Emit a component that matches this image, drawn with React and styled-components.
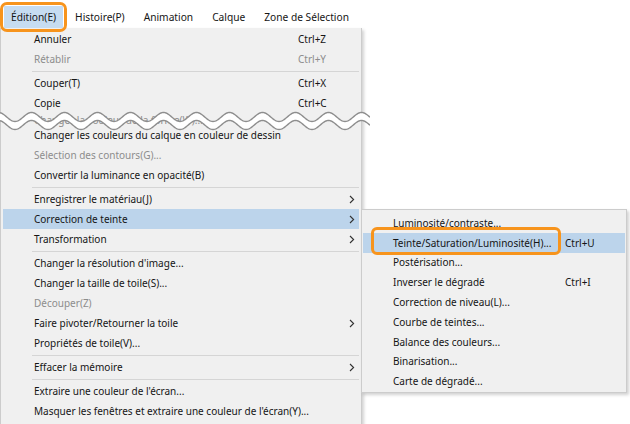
import React from "react";
import styled, { createGlobalStyle } from "styled-components";

const GlobalStyle = createGlobalStyle`
  html, body {
    margin: 0;
    padding: 0;
    background: #fff;
  }
`;

const ORANGE = "#f7941d";
const HILITE = "#bcd4eb";

const mainItems = [
  { label: "Annuler", shortcut: "Ctrl+Z" },
  { label: "Rétablir", shortcut: "Ctrl+Y", disabled: true },
  { sep: true },
  { label: "Couper(T)", shortcut: "Ctrl+X" },
  { label: "Copie", shortcut: "Ctrl+C" },
  { label: "Changer la couleur de la forme(W)...", disabled: true, cut: true },
  { label: "Changer les couleurs du calque en couleur de dessin" },
  { label: "Sélection des contours(G)...", disabled: true },
  { label: "Convertir la luminance en opacité(B)" },
  { sep: true },
  { label: "Enregistrer le matériau(J)", sub: true },
  { label: "Correction de teinte", sub: true, active: true, open: true },
  { label: "Transformation", sub: true },
  { sep: true },
  { label: "Changer la résolution d'image..." },
  { label: "Changer la taille de toile(S)..." },
  { label: "Découper(Z)", disabled: true },
  { label: "Faire pivoter/Retourner la toile", sub: true },
  { label: "Propriétés de toile(V)..." },
  { sep: true },
  { label: "Effacer la mémoire", sub: true },
  { sep: true },
  { label: "Extraire une couleur de l'écran..." },
  { label: "Masquer les fenêtres et extraire une couleur de l'écran(Y)..." },
];

const subItems = [
  { label: "Luminosité/contraste..." },
  { label: "Teinte/Saturation/Luminosité(H)...", shortcut: "Ctrl+U", active: true, ring: true },
  { label: "Postérisation..." },
  { label: "Inverser le dégradé", shortcut: "Ctrl+I" },
  { label: "Correction de niveau(L)..." },
  { label: "Courbe de teintes..." },
  { label: "Balance des couleurs..." },
  { label: "Binarisation..." },
  { label: "Carte de dégradé..." },
];

const Chevron = () => (
  <svg width="6" height="9" viewBox="0 0 6 9">
    <polyline points="1,1 4.6,4.5 1,8" fill="none" stroke="#333" strokeWidth="1.1" />
  </svg>
);

// wavy "cut" mark drawn across the menu
const waveY = (x, offset) => offset + 4.5 * Math.cos((2 * Math.PI * (x - 15)) / 33);

const wavePath = (offset) => {
  let d = "";
  for (let x = 0; x <= 370; x += 1) {
    d += (x === 0 ? "M" : "L") + x + "," + waveY(x, offset).toFixed(2) + " ";
  }
  return d;
};

const Wave = () => {
  const top = wavePath(9);
  const bottom = wavePath(17);
  let fill = top;
  for (let x = 370; x >= 0; x -= 1) {
    fill += "L" + x + "," + waveY(x, 17).toFixed(2) + " ";
  }
  return (
    <WaveSvg width="370" height="28" viewBox="0 0 370 28">
      <path d={fill + "Z"} fill="#fff" />
      <path d={top} fill="none" stroke="#8e8e8e" strokeWidth="1.4" />
      <path d={bottom} fill="none" stroke="#8e8e8e" strokeWidth="1.4" />
    </WaveSvg>
  );
};

const App = () => {
  return (
    <>
      <GlobalStyle />
      <Page>
        <MenuBar>
          <BarItem active>
            Édition(E)
            <BarRing />
          </BarItem>
          <BarItem>Histoire(P)</BarItem>
          <BarItem>Animation</BarItem>
          <BarItem>Calque</BarItem>
          <BarItem>Zone de Sélection</BarItem>
        </MenuBar>
        <Dropdown>
          {mainItems.map((it, i) =>
            it.sep ? (
              <Separator key={i} />
            ) : (
              <Row key={i} active={it.active} disabled={it.disabled} cut={it.cut}>
                <Label>{it.label}</Label>
                <Shortcut>{it.shortcut}</Shortcut>
                <Arrow>{it.sub && <Chevron />}</Arrow>
                {it.open && (
                  <SubMenu>
                    {subItems.map((s, j) => (
                      <SubRow key={j} active={s.active}>
                        <Label>{s.label}</Label>
                        <Shortcut>{s.shortcut}</Shortcut>
                        {s.ring && <SubRing />}
                      </SubRow>
                    ))}
                  </SubMenu>
                )}
              </Row>
            )
          )}
        </Dropdown>
        <Wave />
      </Page>
    </>
  );
};

const Page = styled.div`
  position: relative;
  width: 630px;
  height: 424px;
  overflow: hidden;
  background: #fff;
  font-family: "Noto Sans", "Open Sans", sans-serif;
  font-size: 10px;
  color: #151515;
`;

const MenuBar = styled.div`
  display: flex;
  height: 28px;
  padding: 6px 0 0 4px;
  box-sizing: border-box;
  gap: 5px;
  font-size: 10.2px;
`;

const BarItem = styled.div`
  position: relative;
  display: flex;
  align-items: center;
  padding: 0 7px;
  background: ${(p) => (p.active ? "#c6dcf1" : "transparent")};
`;

const BarRing = styled.div`
  position: absolute;
  inset: -4px;
  border: 3px solid ${ORANGE};
  border-radius: 7px;
`;

const Dropdown = styled.div`
  width: 362px;
  box-sizing: border-box;
  background: #f0f0f0;
  border: 1px solid #cccccc;
  border-top: none;
  padding: 1px 2px 8px 2px;
  box-shadow: 2px 2px 3px rgba(0, 0, 0, 0.18);
`;

const Row = styled.div`
  position: relative;
  display: grid;
  grid-template-columns: minmax(0, 1fr) 43px 18px;
  align-items: center;
  height: ${(p) => (p.cut ? "12px" : "20px")};
  padding-left: 31px;
  white-space: nowrap;
  color: ${(p) => (p.disabled ? "#8d8d8d" : "#151515")};
  background: ${(p) => (p.active ? HILITE : "transparent")};
  align-content: ${(p) => (p.cut ? "start" : "center")};
`;

const Label = styled.span`
  overflow: visible;
`;

const Shortcut = styled.span``;

const Arrow = styled.span`
  display: flex;
  align-items: center;
  padding-left: 8px;
`;

const Separator = styled.div`
  height: 4px;
  margin-left: 29px;
  display: flex;
  align-items: center;
  &::after {
    content: "";
    flex: 1;
    height: 1px;
    background: #d5d5d5;
  }
`;

const SubMenu = styled.div`
  position: absolute;
  left: calc(100% + 2px);
  top: 0;
  width: 266px;
  box-sizing: border-box;
  padding: 3px 1px 1px 1px;
  background: #f0f0f0;
  border: 1px solid #cccccc;
  box-shadow: 2px 2px 3px rgba(0, 0, 0, 0.18);
  color: #151515;
`;

const SubRow = styled.div`
  position: relative;
  display: grid;
  grid-template-columns: minmax(0, 1fr) 60px;
  align-items: center;
  height: 19.8px;
  padding-left: 30px;
  white-space: nowrap;
  background: ${(p) => (p.active ? HILITE : "transparent")};
`;

const SubRing = styled.div`
  position: absolute;
  left: 8px;
  width: 190px;
  top: -6px;
  height: 28px;
  box-sizing: border-box;
  border: 3px solid ${ORANGE};
  border-radius: 6px;
`;

const WaveSvg = styled.svg`
  position: absolute;
  left: 0;
  top: 108px;
`;

export default App;
